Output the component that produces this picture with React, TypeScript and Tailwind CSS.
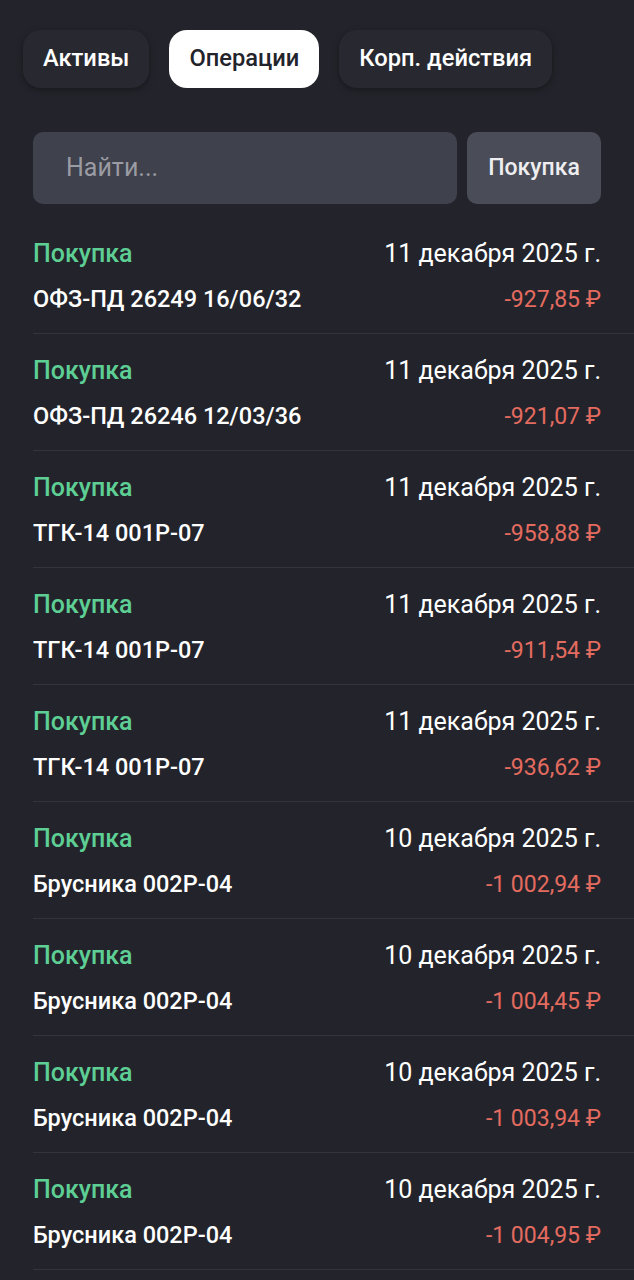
const ops = [
  { date: "11 декабря 2025 г.", name: "ОФЗ-ПД 26249 16/06/32", sum: "-927,85 ₽" },
  { date: "11 декабря 2025 г.", name: "ОФЗ-ПД 26246 12/03/36", sum: "-921,07 ₽" },
  { date: "11 декабря 2025 г.", name: "ТГК-14 001P-07", sum: "-958,88 ₽" },
  { date: "11 декабря 2025 г.", name: "ТГК-14 001P-07", sum: "-911,54 ₽" },
  { date: "11 декабря 2025 г.", name: "ТГК-14 001P-07", sum: "-936,62 ₽" },
  { date: "10 декабря 2025 г.", name: "Брусника 002P-04", sum: "-1 002,94 ₽" },
  { date: "10 декабря 2025 г.", name: "Брусника 002P-04", sum: "-1 004,45 ₽" },
  { date: "10 декабря 2025 г.", name: "Брусника 002P-04", sum: "-1 003,94 ₽" },
  { date: "10 декабря 2025 г.", name: "Брусника 002P-04", sum: "-1 004,95 ₽" },
];

const tabs = ["Активы", "Операции", "Корп. действия"];

export default function App() {
  return (
    <div
      className="min-h-[1280px] w-[634px] bg-[#23242b] overflow-hidden"
      style={{ fontFamily: "Roboto, 'Noto Sans', sans-serif" }}
    >
      {/* tabs */}
      <div className="flex gap-[20px] pl-[23px] pt-[30px]">
        {tabs.map((t) => (
          <div
            key={t}
            className={
              t === "Операции"
                ? "h-[58px] px-[20px] flex items-center rounded-[18px] bg-white text-[#23242b] text-[23.7px] font-medium"
                : "h-[58px] px-[20px] flex items-center rounded-[18px] bg-[#282930] text-white text-[23.7px] font-medium shadow-[0_2px_6px_rgba(0,0,0,0.35)]"
            }
          >
            {t}
          </div>
        ))}
      </div>

      {/* search */}
      <div className="flex gap-[10px] px-[33px] mt-[44px]">
        <div className="flex-1 h-[72px] rounded-[10px] bg-[#3f414c] flex items-center pl-[33px] text-[25px] text-[#9a9ba3]">
          Найти...
        </div>
        <div className="w-[134px] h-[72px] rounded-[10px] bg-[#4a4c58] flex items-center justify-center text-[23px] font-medium text-[#eeeef0]">
          Покупка
        </div>
      </div>

      {/* list */}
      <div className="pl-[33px] mt-[13px]">
        {ops.map((o, i) => (
          <div key={i} className="h-[117px] border-b border-[#33343c] pr-[33px] pt-[17px]">
            <div className="flex justify-between items-center h-[40px]">
              <span className="text-[25px] font-medium text-[#5ecf94]">Покупка</span>
              <span className="text-[25px] text-white">{o.date}</span>
            </div>
            <div className="flex justify-between items-center h-[40px] mt-[6px]">
              <span className="text-[23.5px] font-medium text-white">{o.name}</span>
              <span className="text-[23px] text-[#e46b5f]">{o.sum}</span>
            </div>
          </div>
        ))}
      </div>
    </div>
  );
}
